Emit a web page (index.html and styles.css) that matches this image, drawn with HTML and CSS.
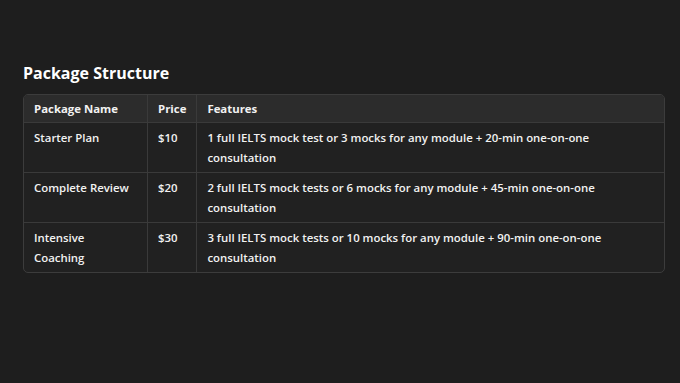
FILE: index.html
```html
<!DOCTYPE html>
<html>
<head>
<meta charset="utf-8">
<link rel="stylesheet" href="styles.css">
</head>
<body>
<main class="page">
  <h2 class="title">Package Structure</h2>
  <div class="table-wrap">
    <table class="pkg">
      <thead>
        <tr><th class="c-name">Package Name</th><th class="c-price">Price</th><th>Features</th></tr>
      </thead>
      <tbody>
        <tr><td>Starter Plan</td><td>$10</td><td>1 full IELTS mock test or 3 mocks for any module + 20-min one-on-one consultation</td></tr>
        <tr><td>Complete Review</td><td>$20</td><td>2 full IELTS mock tests or 6 mocks for any module + 45-min one-on-one consultation</td></tr>
        <tr><td>Intensive Coaching</td><td>$30</td><td>3 full IELTS mock tests or 10 mocks for any module + 90-min one-on-one consultation</td></tr>
      </tbody>
    </table>
  </div>
</main>
</body>
</html>
```
FILE: styles.css
```css
html, body {
  margin: 0;
  background: #1e1e1e;
}
body {
  font-family: "Open Sans", "Noto Sans", sans-serif;
  color: #f2f2f2;
  width: 680px;
  height: 383px;
  overflow: hidden;
}
.page {
  padding: 61px 15px 0 23px;
}
.title {
  margin: 0 0 9px 0;
  font-size: 16px;
  font-weight: 700;
  line-height: 24px;
  color: #ffffff;
}
.table-wrap {
  border: 1px solid #3c3c3c;
  border-radius: 5px;
  overflow: hidden;
  background: #212121;
}
.pkg {
  width: 100%;
  border-collapse: collapse;
  font-size: 11.4px;
  font-weight: 600;
  line-height: 20px;
}
.pkg th, .pkg td {
  text-align: left;
  vertical-align: top;
  padding: 5px 10px 4px;
  border-left: 1px solid #3a3a3a;
  border-top: 1px solid #3a3a3a;
}
.pkg th:first-child, .pkg td:first-child { border-left: none; }
.pkg thead th {
  border-top: none;
  background: #2c2c2c;
  padding: 4px 10px 3px;
}
.pkg .c-name { width: 103px; }
.pkg .c-price { width: 28px; }
```
